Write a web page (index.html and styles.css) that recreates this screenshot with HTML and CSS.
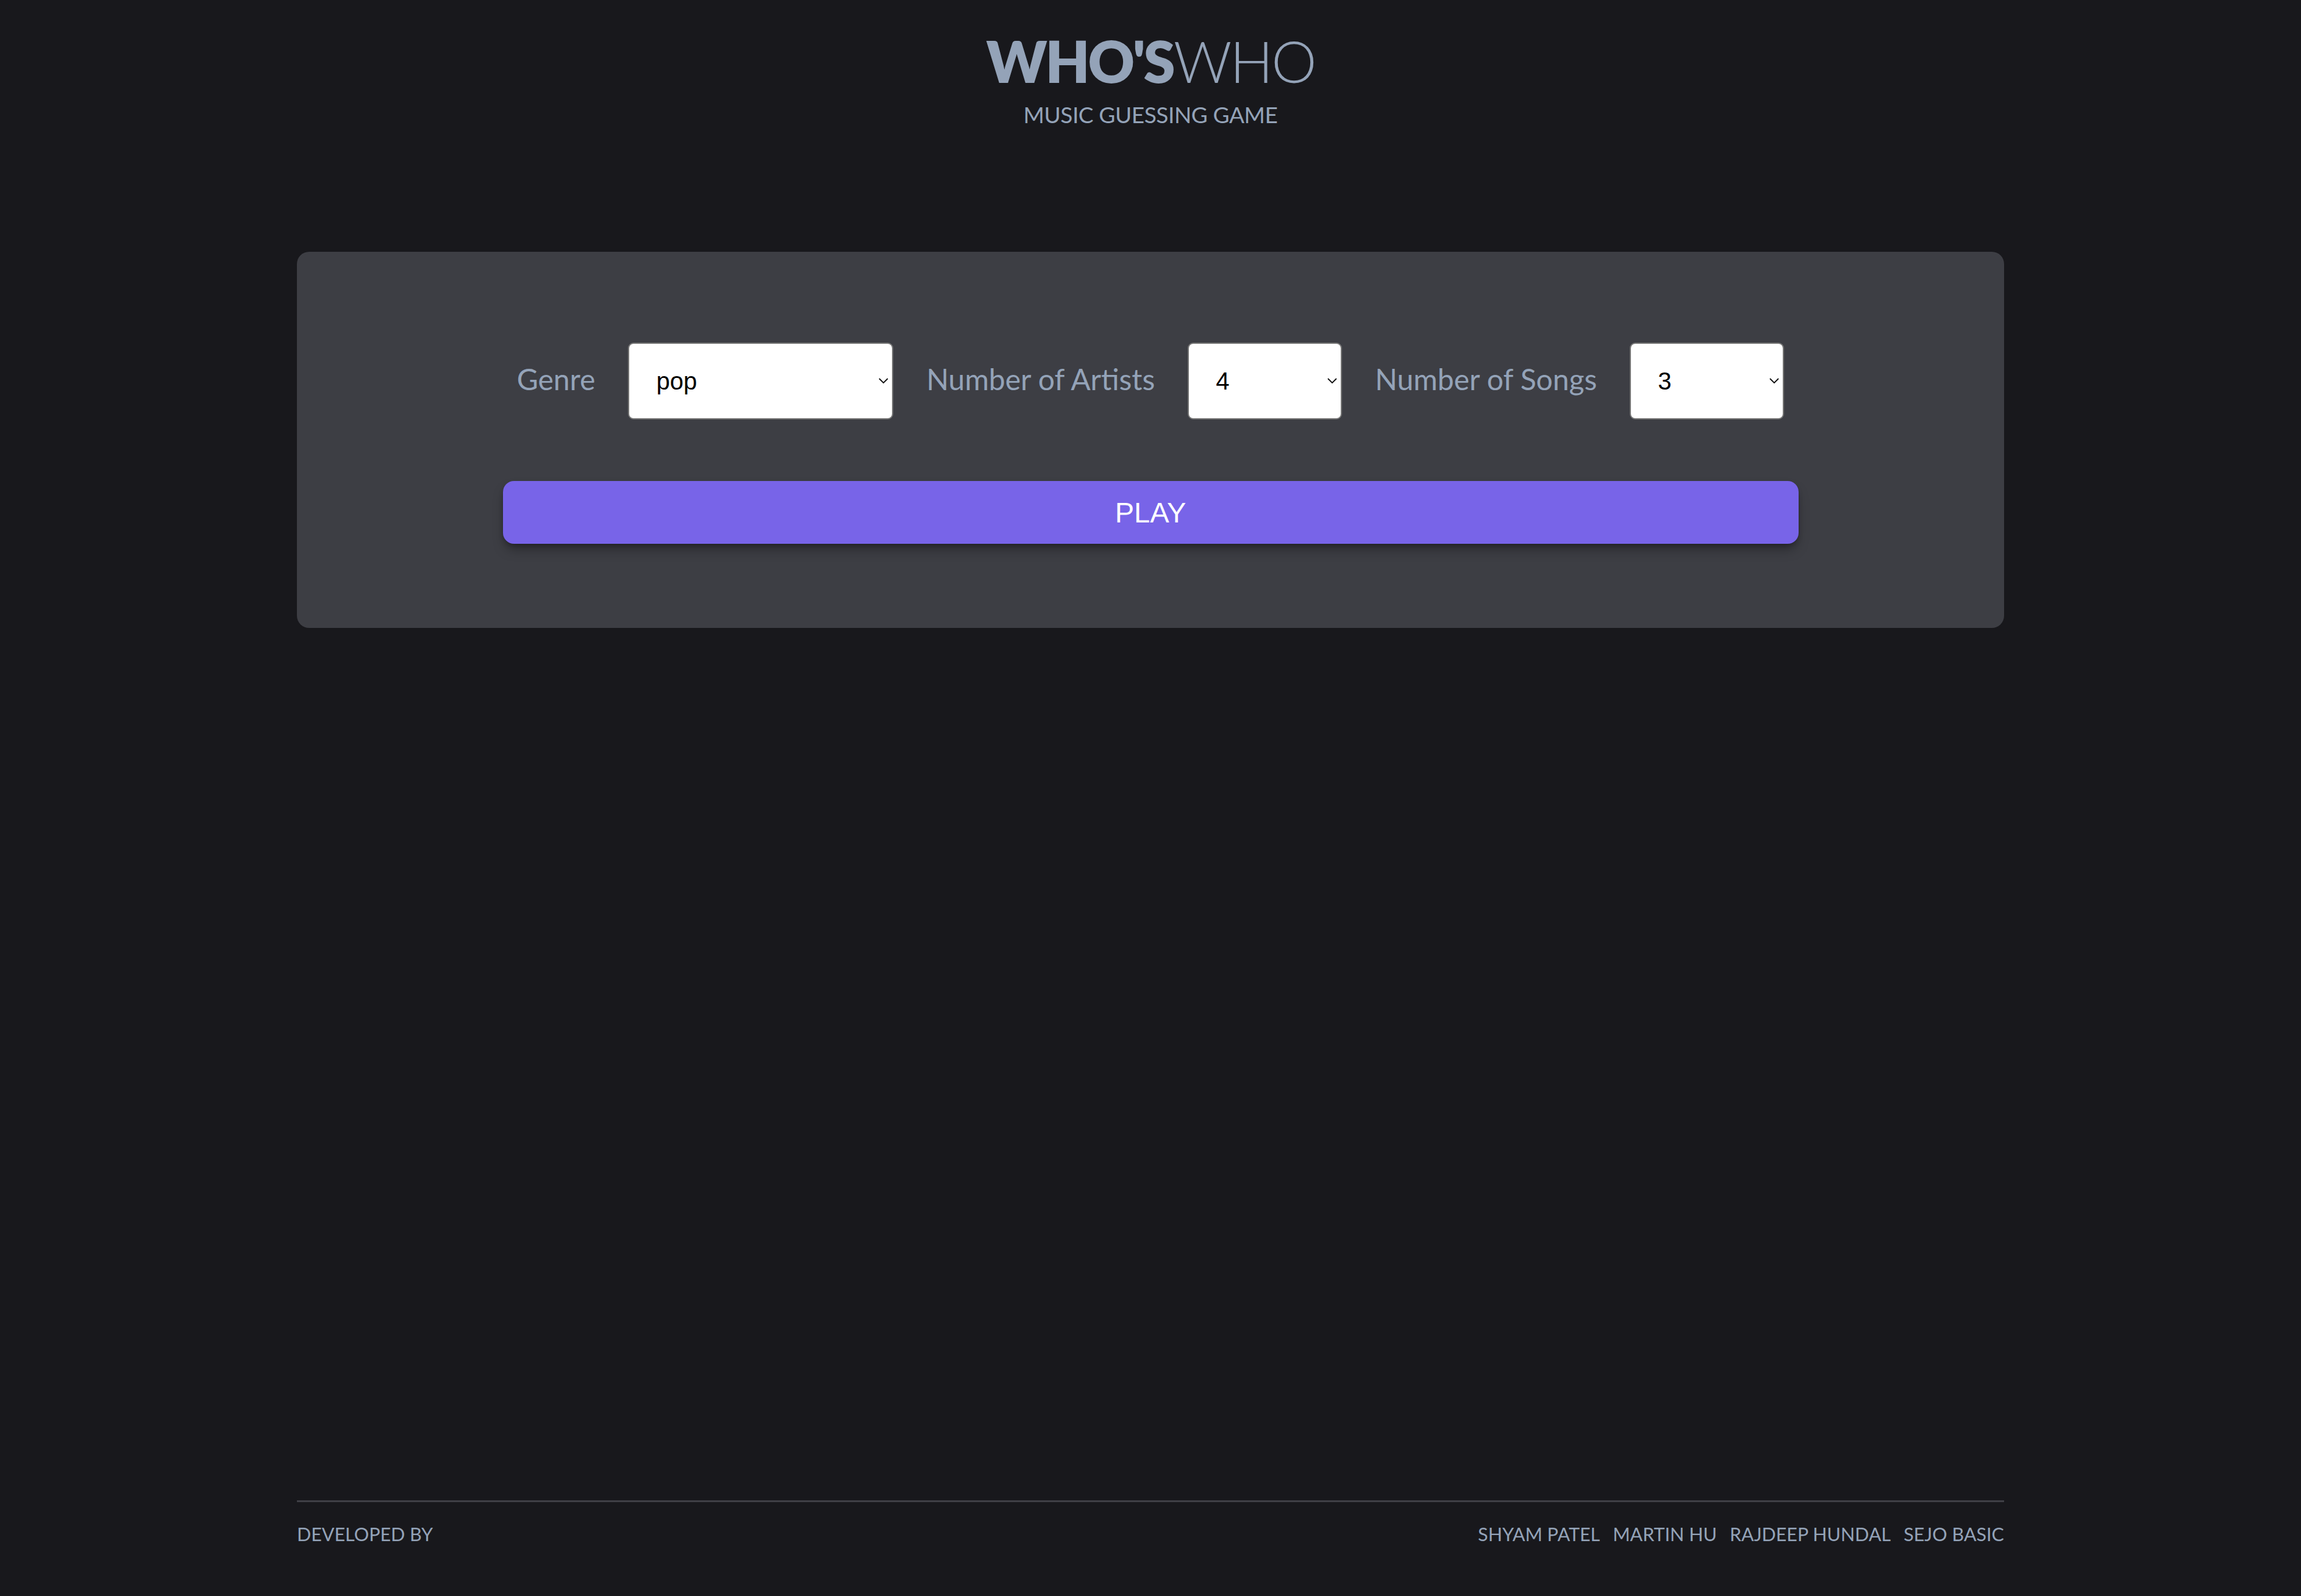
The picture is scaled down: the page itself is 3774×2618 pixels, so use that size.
FILE: index.html
```html
<!DOCTYPE html>
<html lang="en">
<head>
<meta charset="utf-8">
<title>Who's Who</title>
<link rel="stylesheet" href="styles.css">
</head>
<body>
<div class="page">
  <header class="header">
    <h1 class="title"><span class="title-bold">WHO'S</span><span class="title-light">WHO</span></h1>
    <p class="subtitle">MUSIC GUESSING GAME</p>
  </header>

  <main class="card">
    <div class="card-inner">
      <div class="options">
        <label class="label" for="genre">Genre</label>
        <div class="select-wrap genre">
          <select id="genre" class="select">
            <option>pop</option>
            <option>rock</option>
            <option>hip-hop</option>
          </select>
          <svg class="chevron" viewBox="0 0 16 9" width="16" height="9"><path d="M1 1 L8 8 L15 1" fill="none" stroke="#111" stroke-width="1.8"/></svg>
        </div>
        <label class="label" for="artists">Number of Artists</label>
        <div class="select-wrap small">
          <select id="artists" class="select">
            <option>4</option>
            <option>2</option>
            <option>3</option>
          </select>
          <svg class="chevron" viewBox="0 0 16 9" width="16" height="9"><path d="M1 1 L8 8 L15 1" fill="none" stroke="#111" stroke-width="1.8"/></svg>
        </div>
        <label class="label" for="songs">Number of Songs</label>
        <div class="select-wrap small">
          <select id="songs" class="select">
            <option>3</option>
            <option>1</option>
            <option>2</option>
          </select>
          <svg class="chevron" viewBox="0 0 16 9" width="16" height="9"><path d="M1 1 L8 8 L15 1" fill="none" stroke="#111" stroke-width="1.8"/></svg>
        </div>
      </div>
      <button class="play" type="button">PLAY</button>
    </div>
  </main>

  <footer class="footer">
    <span class="dev">DEVELOPED BY</span>
    <div class="names">
      <span>SHYAM PATEL</span>
      <span>MARTIN HU</span>
      <span>RAJDEEP HUNDAL</span>
      <span>SEJO BASIC</span>
    </div>
  </footer>
</div>
</body>
</html>
```

FILE: styles.css
```css
* { box-sizing: border-box; }

html, body {
  margin: 0;
  padding: 0;
  background: #18181c;
}

body {
  font-family: Lato, "Liberation Sans", sans-serif;
  color: #94a3b8;
}

.page {
  min-height: 100vh;
  display: flex;
  flex-direction: column;
  align-items: center;
}

.header {
  padding-top: 53px;
  text-align: center;
}

.title {
  margin: 0;
  font-size: 94px;
  line-height: 1;
  font-weight: 400;
  letter-spacing: -3px;
}

.title-bold { font-weight: 800; }
.title-light { font-weight: 300; }

.subtitle {
  margin: 22px 0 0;
  font-size: 37px;
  line-height: 1;
  font-weight: 400;
  letter-spacing: -0.4px;
}

.card {
  margin-top: 207px;
  width: 2800px;
  background: #3d3e44;
  border-radius: 20px;
  padding: 149px 0 138px;
  display: flex;
  justify-content: center;
}

.card-inner {
  width: 2125px;
  display: flex;
  flex-direction: column;
  align-items: center;
}

.options {
  display: flex;
  align-items: center;
  gap: 54px;
}

.label {
  font-size: 48px;
  line-height: 1;
  color: #94a3b8;
  margin-top: -6px;
}

.select-wrap {
  position: relative;
  height: 126px;
}

.select-wrap.genre { width: 435px; }
.select-wrap.small { width: 253px; }

.select {
  appearance: none;
  -webkit-appearance: none;
  width: 100%;
  height: 100%;
  margin: 0;
  background: #fff;
  border: 2px solid #767676;
  border-radius: 9px;
  padding: 0 40px 0 44px;
  font-family: "Liberation Sans", Arial, sans-serif;
  font-size: 40px;
  color: #000;
}

.chevron {
  position: absolute;
  right: 8px;
  top: 58px;
  pointer-events: none;
}

.play {
  margin-top: 101px;
  width: 100%;
  height: 103px;
  border: none;
  border-radius: 18px;
  background: #7864e8;
  color: #fff;
  font-family: "Liberation Sans", Arial, sans-serif;
  font-size: 47px;
  box-shadow: 0 12px 20px -4px rgba(0, 0, 0, 0.35), 0 4px 8px -2px rgba(0, 0, 0, 0.25);
  cursor: pointer;
}

.footer {
  margin-top: auto;
  width: 2800px;
  border-top: 3px solid #3f3f46;
  padding: 37px 0 87px;
  display: flex;
  justify-content: space-between;
  font-size: 30.5px;
  line-height: 1;
}

.names {
  display: flex;
  gap: 21px;
}
```
